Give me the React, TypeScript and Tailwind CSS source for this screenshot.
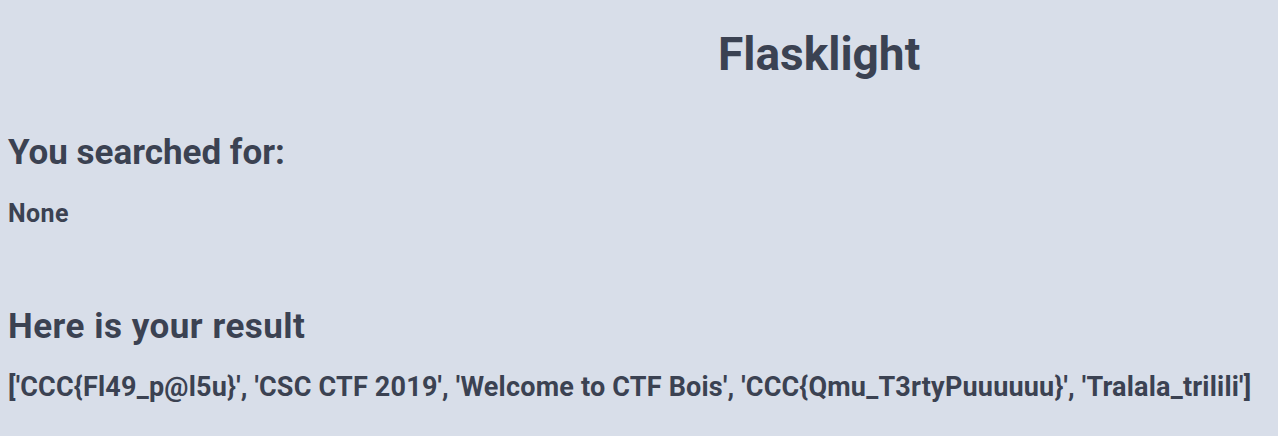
const results = [
  "CCC{Fl49_p@l5u}",
  "CSC CTF 2019",
  "Welcome to CTF Bois",
  "CCC{Qmu_T3rtyPuuuuuu}",
  "Tralala_trilili",
];

export default function App() {
  return (
    <div className="min-h-[436px] bg-[#d8dee9] text-[#3b4252] font-['Roboto',sans-serif] font-bold px-2 pt-[31px]">
      <h1 className="pl-[710px] text-[46px] leading-[46px]">Flasklight</h1>

      <h2 className="mt-[58px] text-[35px] leading-[35px]">You searched for:</h2>
      <h3 className="mt-[31px] text-[25px] leading-[25px] tracking-[0.4px]">None</h3>

      <h2 className="mt-[83px] text-[35px] leading-[35px] tracking-[0.5px]">Here is your result</h2>
      <h3 className="mt-[30px] text-[27px] leading-[27px] tracking-[0.2px]">
        [{results.map((r) => `'${r}'`).join(", ")}]
      </h3>
    </div>
  );
}
